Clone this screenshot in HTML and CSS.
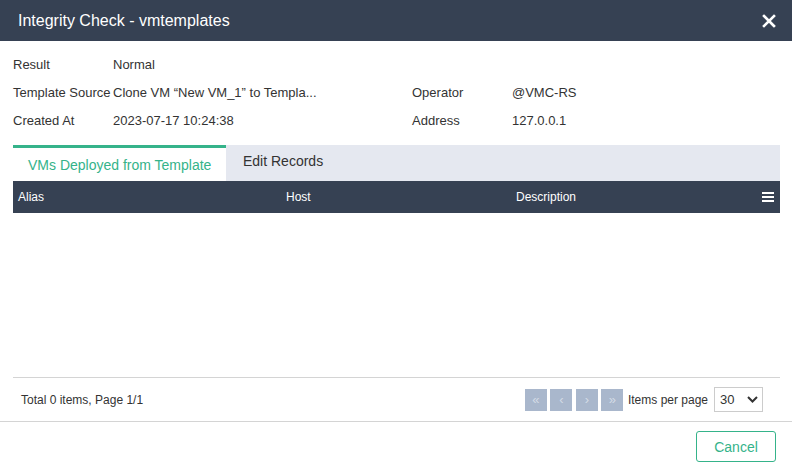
FILE: index.html
```html
<!DOCTYPE html>
<html>
<head>
<meta charset="utf-8">
<link rel="stylesheet" href="styles.css">
</head>
<body>
<div class="dialog">
  <div class="titlebar">
    <span class="title">Integrity Check - vmtemplates</span>
    <svg class="close" width="14" height="14" viewBox="0 0 14 14"><path d="M2 2 L12 12 M12 2 L2 12" stroke="#fff" stroke-width="2.6" stroke-linecap="square"/></svg>
  </div>
  <div class="body">
    <div class="info">
      <div class="cell"><span class="lbl">Result</span><span class="val">Normal</span></div>
      <div class="cell"></div>
      <div class="cell"><span class="lbl">Template Source</span><span class="val">Clone VM “New VM_1” to Templa...</span></div>
      <div class="cell"><span class="lbl">Operator</span><span class="val">@VMC-RS</span></div>
      <div class="cell"><span class="lbl">Created At</span><span class="val">2023-07-17 10:24:38</span></div>
      <div class="cell"><span class="lbl">Address</span><span class="val">127.0.0.1</span></div>
    </div>
    <div class="tabs">
      <div class="tab active">VMs Deployed from Template</div>
      <div class="tab">Edit Records</div>
    </div>
    <div class="thead">
      <div class="th c1">Alias</div>
      <div class="th c2">Host</div>
      <div class="th c3">Description</div>
      <svg class="menu" width="12" height="10" viewBox="0 0 12 10"><rect x="0" y="0" width="12" height="2" fill="#fff"/><rect x="0" y="4" width="12" height="2" fill="#fff"/><rect x="0" y="8" width="12" height="2" fill="#fff"/></svg>
    </div>
    <div class="tbody"></div>
    <div class="pager">
      <span class="total">Total 0 items, Page 1/1</span>
      <div class="pg">
        <span class="pbtn">«</span>
        <span class="pbtn">‹</span>
        <span class="pbtn">›</span>
        <span class="pbtn">»</span>
        <span class="ipp">Items per page</span>
        <div class="sel"><span>30</span><svg width="11" height="7" viewBox="0 0 11 7"><path d="M1 1 L5.5 5.5 L10 1" fill="none" stroke="#333" stroke-width="2"/></svg></div>
      </div>
    </div>
  </div>
  <div class="footer">
    <button class="cancel">Cancel</button>
  </div>
</div>
</body>
</html>
```
FILE: styles.css
```css
* { box-sizing: border-box; }
html, body { margin: 0; padding: 0; }
body {
  width: 792px;
  height: 466px;
  background: #fff;
  font-family: "Liberation Sans", Arial, sans-serif;
  font-size: 13px;
  color: #333;
  overflow: hidden;
}
.dialog { width: 792px; height: 466px; display: flex; flex-direction: column; }
.titlebar {
  height: 41px;
  background: #364153;
  display: flex;
  align-items: center;
  justify-content: space-between;
  padding: 0 16px 0 18px;
}
.title { color: #fff; font-size: 16px; }
.close { display: block; }
.body { padding: 0 12px 0 13px; height: 380px; display: flex; flex-direction: column; }
.info {
  display: grid;
  grid-template-columns: 399px 1fr;
  grid-auto-rows: 28px;
  padding-top: 9px;
}
.cell { display: flex; align-items: center; white-space: nowrap; }
.lbl { width: 100px; }
.tabs {
  margin-top: 11px;
  height: 36px;
  background: #e5e8f0;
  display: flex;
}
.tab { padding: 0 17px; line-height: 33px; font-size: 14px; color: #333; white-space: nowrap; }
.tab.active {
  background: #fff;
  border-top: 3px solid #35b38a;
  color: #35b38a;
  width: 213px;
  padding: 2px 0 0 15px;
  line-height: 30px;
}
.thead {
  height: 32px;
  background: #364153;
  display: flex;
  align-items: center;
  color: #fff;
  font-size: 12px;
}
.th.c1 { width: 273px; padding-left: 5px; }
.th.c2 { width: 230px; }
.th.c3 { flex: 1; }
.menu { margin-right: 6px; }
.tbody { height: 165px; border-bottom: 1px solid #d4d4d4; }
.pager {
  height: 43px;
  display: flex;
  align-items: center;
  justify-content: space-between;
  padding: 0 17px 0 8px;
  font-size: 12px;
}
.pg { display: flex; align-items: center; }
.pbtn {
  width: 22px;
  height: 22px;
  background: #a9b7cc;
  color: #d4dbe6;
  font-size: 13px;
  display: flex;
  align-items: center;
  justify-content: center;
  margin-right: 3.5px;
}
.ipp { margin-left: 1px; margin-right: 6px; }
.sel {
  width: 49px;
  height: 25px;
  border: 1px solid #ccc;
  display: flex;
  align-items: center;
  justify-content: space-between;
  padding: 0 4px 0 5px;
  font-size: 13px;
  color: #333;
}
.footer {
  border-top: 1px solid #d4d4d4;
  flex: 1;
  display: flex;
  justify-content: flex-end;
  align-items: flex-start;
  padding: 9px 16px 0 0;
}
.cancel {
  width: 80px;
  height: 31px;
  border: 1px solid #35b38a;
  border-radius: 3px;
  background: #fff;
  color: #35b38a;
  font-family: "Liberation Sans", Arial, sans-serif;
  font-size: 14px;
}
```
